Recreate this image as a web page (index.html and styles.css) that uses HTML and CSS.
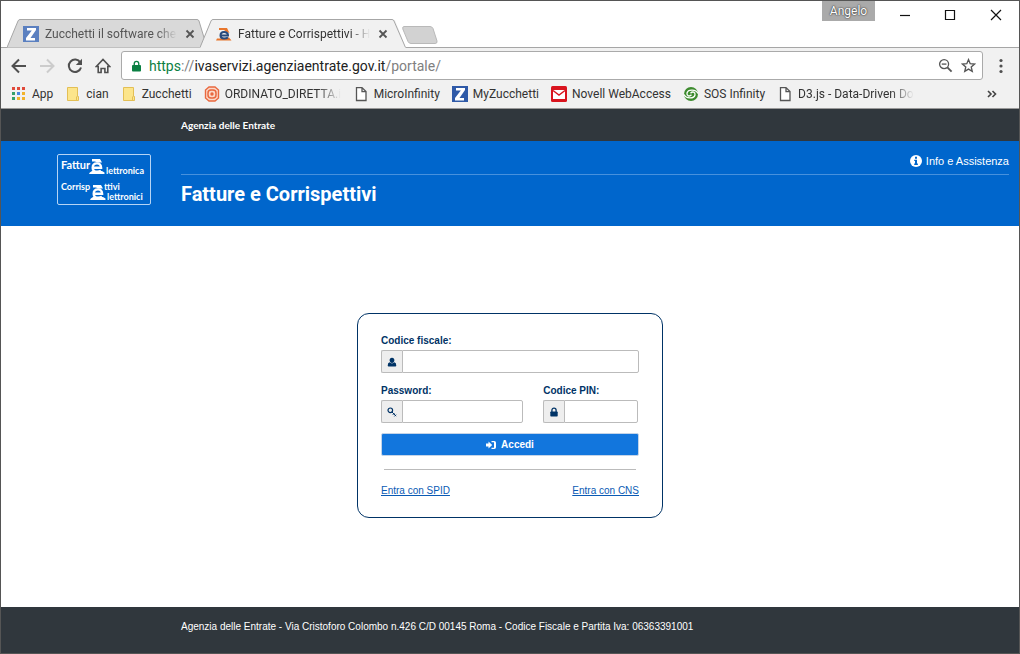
FILE: index.html
```html
<!DOCTYPE html>
<html lang="it">
<head>
<meta charset="utf-8">
<title>Fatture e Corrispettivi</title>
<link rel="stylesheet" href="styles.css">
</head>
<body>
<svg class="defs" width="0" height="0" aria-hidden="true">
  <symbol id="z-logo" viewBox="0 0 16 16"><path fill="currentColor" d="M0 0h16v16H0z"/><path fill="#fff" d="M4 2h9v2L7.500 12H12v2.500H3V12L8.800 4.500H4z"/></symbol>
  <symbol id="folder" viewBox="0 0 16 16"><path fill="#fce58b" stroke="#e3bf55" d="M2.500 1.500h10v9h1v4h-11z"/><path fill="none" stroke="#e3bf55" d="M11.500 10.500v4"/></symbol>
  <symbol id="page" viewBox="0 0 16 16"><path fill="#fff" stroke="#555" stroke-width="1.300" d="M3.500 1.600H9l4 4v8.900H3.500zM9 1.600v4h4"/></symbol>
  <symbol id="close" viewBox="0 0 10 10"><path fill="none" stroke="currentColor" stroke-width="1.800" d="M1.500 1.500l7 7M8.500 1.500l-7 7"/></symbol>
  <symbol id="e-mark" viewBox="0 0 16 17"><path fill="currentColor" d="M3 1h8l2 3.500H8L6 3.500H3zM.8 14.500 3 13h10l2.500 1.500V16H0z"/><path fill="none" stroke="currentColor" stroke-width="2.400" d="M3.500 9.800h8.600C12 6.800 10.500 5.400 8 5.400S3.700 7 3.700 9.700s1.800 4.100 4.500 4.100c1.500 0 2.800-.3 3.800-1"/></symbol>
</svg>
<div class="window">
  <header class="titlebar">
    <div class="tabs">
      <div class="tab tab-back">
        <svg class="tab-shape" viewBox="0 0 200 29" preserveAspectRatio="none"><path fill="#d9d9d9" stroke="#a6a6a6" d="M0 28.500 11 2q.6-1.500 2-1.500h177q1.500 0 2 1.500l8 26.500"/></svg>
        <svg class="icon z-soft"><use href="#z-logo"/></svg>
        <span class="tab-title">Zucchetti il software che</span>
        <button class="plain tab-close" aria-label="Chiudi scheda"><svg><use href="#close"/></svg></button>
      </div>
      <div class="tab tab-front">
        <svg class="tab-shape" viewBox="0 0 206 29" preserveAspectRatio="none"><path fill="#f1f1f1" d="M0 29 11 1h184l11 28z"/><path fill="none" stroke="#a6a6a6" d="M0 28.500 11 2q.6-1.500 2-1.500h179q1.500 0 2 1.500l11.500 26.500"/></svg>
        <svg class="icon" viewBox="0 0 16 16"><path fill="#e8762c" d="M3 2h8l2.500 5-3-1L8 4H3zM1 12.500h3l9-1 2.500 3H0z"/><path fill="none" stroke="#274a7c" stroke-width="2" d="M4.500 9.500H12C12 7.300 10.500 6 8 6S4.500 7.300 4.500 9.500 6 12.500 8 12.500s3-.3 4-1"/></svg>
        <span class="tab-title">Fatture e Corrispettivi - H</span>
        <button class="plain tab-close" aria-label="Chiudi scheda"><svg><use href="#close"/></svg></button>
      </div>
      <button class="plain new-tab" aria-label="Nuova scheda"><svg viewBox="0 0 36 18"><path fill="#d2d2d2" stroke="#b9b9b9" d="M2 .5h26q2 0 3 2l4 12.500q.5 2.500-2 2.500H9q-2 0-3-2L.8 3Q.2.5 2 .5z"/></svg></button>
    </div>
    <div class="controls">
      <button class="plain profile">Angelo</button>
      <button class="plain control" aria-label="Riduci"><svg viewBox="0 0 12 12"><path d="M1 6.500h10"/></svg></button>
      <button class="plain control" aria-label="Ingrandisci"><svg viewBox="0 0 12 12"><path d="M1.500 1.500h9v9h-9z"/></svg></button>
      <button class="plain control" aria-label="Chiudi"><svg viewBox="0 0 12 12"><path d="M1 1l10 10M11 1 1 11"/></svg></button>
    </div>
  </header>

  <div class="toolbar">
    <button class="plain tool" aria-label="Indietro"><svg viewBox="0 0 16 16"><path d="M15 8H2M8 1.500 1.500 8 8 14.500"/></svg></button>
    <button class="plain tool tool-off" aria-label="Avanti"><svg viewBox="0 0 16 16"><path d="M1 8h13M8 1.500 14.500 8 8 14.500"/></svg></button>
    <button class="plain tool" aria-label="Ricarica"><svg viewBox="0 0 16 16"><path d="M13.300 4.500A6.200 6.200 0 1 0 14 9.500"/><path class="solid" d="M15 .8V7H8.800z"/></svg></button>
    <button class="plain tool" aria-label="Pagina iniziale"><svg viewBox="0 0 16 16"><path stroke-width="1.600" d="M3.200 8.500H1.300L8 1.500l6.700 7h-1.900v6H9.900v-4H6.100v4H3.200z"/></svg></button>
    <div class="address">
      <svg class="padlock" viewBox="0 0 10 12"><path fill="#0b8043" d="M1 5h8q1 0 1 1v5q0 1-1 1H1q-1 0-1-1V6q0-1 1-1z"/><path fill="none" stroke="#0b8043" stroke-width="1.500" d="M2.500 5.500V3.300a2.500 2.500 0 0 1 5 0v2.200"/></svg>
      <div class="url"><span class="secure">https</span><span class="dim">://</span>ivaservizi.agenziaentrate.gov.it<span class="dim">/portale/</span></div>
      <button class="plain" aria-label="Zoom"><svg class="field-icon" viewBox="0 0 16 16"><circle cx="6.500" cy="6.500" r="4.800"/><path d="M4 6.500h5"/><path stroke-width="2" d="M10 10l4.500 4.500"/></svg></button>
      <button class="plain" aria-label="Preferiti"><svg class="field-icon" viewBox="0 0 16 16"><path d="M8 1.700l1.800 4.400 4.700.4-3.600 3.100 1.100 4.600L8 11.800l-4 2.400 1.100-4.600-3.600-3.100 4.700-.4z"/></svg></button>
    </div>
    <button class="plain menu" aria-label="Menu"><svg viewBox="0 0 4 16"><circle cx="2" cy="2.500" r="1.600"/><circle cx="2" cy="8" r="1.600"/><circle cx="2" cy="13.500" r="1.600"/></svg></button>
  </div>

  <nav class="bookmarks">
    <a href="#"><svg class="icon" viewBox="0 0 16 16"><path fill="#e04a3a" d="M1 1h3v3H1zM6 1h3v3H6zM11 1h3v3h-3z"/><path fill="#35a06a" d="M1 6h3v3H1zM1 11h3v3H1z"/><path fill="#4a86e0" d="M6 6h3v3H6z"/><path fill="#f2b32b" d="M11 6h3v3h-3zM6 11h3v3H6zM11 11h3v3h-3z"/></svg><span>App</span></a>
    <a href="#"><svg class="icon"><use href="#folder"/></svg><span>cian</span></a>
    <a href="#"><svg class="icon"><use href="#folder"/></svg><span>Zucchetti</span></a>
    <a href="#"><svg class="icon" viewBox="0 0 16 16"><g fill="none" stroke="#e9683f"><path fill="#fbd9c9" stroke-width="1.400" d="M5 1h6l3.500 3v8L11 15H5l-3.500-3V4z"/><rect x="4" y="4" width="8" height="8" rx="3" stroke-width="1.500"/></g><circle cx="8" cy="8" r="1.700" fill="#e9683f"/></svg><span class="clipped">ORDINATO_DIRETTA.i</span></a>
    <a href="#"><svg class="icon"><use href="#page"/></svg><span>MicroInfinity</span></a>
    <a href="#"><svg class="icon z-full"><use href="#z-logo"/></svg><span>MyZucchetti</span></a>
    <a href="#"><svg class="icon" viewBox="0 0 16 16"><rect width="16" height="16" rx="1.500" fill="#d9141e"/><path fill="#fff" d="M2 4h12v9H2z"/><path fill="none" stroke="#d9141e" stroke-width="1.400" d="M2 4.500l6 4.500 6-4.500"/></svg><span>Novell WebAccess</span></a>
    <a href="#"><svg class="icon" viewBox="0 0 16 16"><circle cx="8" cy="8" r="7" fill="#3d8b2e"/><path fill="none" stroke="#fff" stroke-width="1.300" d="M1 8.500c2 4.500 10 4.500 11 .5C12.500 6 9.500 5 7.500 7.200M15 7.500C13 3 5 3 4 7c-.5 3 2.500 4 4.500 1.800"/></svg><span>SOS Infinity</span></a>
    <a href="#"><svg class="icon"><use href="#page"/></svg><span class="clipped">D3.js - Data-Driven Do</span></a>
    <button class="plain more" aria-label="Altri preferiti"><svg viewBox="0 0 10 8"><path d="M1 1l3 3-3 3M5.500 1l3 3-3 3"/></svg></button>
  </nav>

  <div class="agency">Agenzia delle Entrate</div>
  <div class="banner">
    <svg class="logo" viewBox="0 0 94 51" role="img" aria-label="Fattura Elettronica, Corrispettivi Elettronici">
      <rect x=".5" y=".5" width="93" height="50" rx="1.500"/>
      <text class="large" x="4" y="15">Fattur</text><text x="49" y="20">lettronica</text>
      <text x="4" y="36">Corrisp</text><text x="47" y="36">ttivi</text><text x="50" y="46">lettronici</text>
      <use href="#e-mark" x="32" y="4" width="16" height="17"/><use href="#e-mark" x="33" y="30" width="16" height="17"/>
    </svg>
    <div class="banner-text">
      <a class="info" href="#"><svg viewBox="0 0 12 12"><circle cx="6" cy="6" r="6" fill="#fff"/><path fill="#06c" d="M5 1.800h2v1.900H5zM4.200 4.800H7v3.800h.9V10H4.200V8.600H5V6.100h-.8z"/></svg>Info e Assistenza</a>
      <h1>Fatture e Corrispettivi</h1>
    </div>
  </div>

  <main>
    <form class="login">
      <div class="field">
        <label for="cf">Codice fiscale:</label>
        <div class="group"><span class="addon"><svg viewBox="0 0 10 10"><path d="M5 .8c1.600 0 2.400 1.200 2.400 2.500S6.400 6 5 6 2.600 4.600 2.600 3.300 3.400.8 5 .8zM2.600 5.300Q5 7.500 7.400 5.300 9.300 5.800 9.300 8.500q0 1-1 1H1.700q-1 0-1-1 0-2.700 1.900-3.200z"/></svg></span><input id="cf" type="text"></div>
      </div>
      <div class="pair">
        <div class="field">
          <label for="pw">Password:</label>
          <div class="group"><span class="addon"><svg viewBox="0 0 10 10"><g fill="none" stroke="#003366"><circle cx="3.300" cy="3.300" r="2.300" stroke-width="1.200"/><path d="M4.900 4.900l4.300 4.300M5.800 7.800l1.600-1.600M7.400 9.400l1.700-1.700"/></g></svg></span><input id="pw" type="password"></div>
        </div>
        <div class="field">
          <label for="pin">Codice PIN:</label>
          <div class="group"><span class="addon"><svg viewBox="0 0 10 10"><path d="M2 4.500h6q.7 0 .7.700v3.600q0 .7-.7.700H2q-.7 0-.7-.7V5.200q0-.7.700-.7z"/><path fill="none" stroke="#003366" stroke-width="1.300" d="M2.900 5V3.200a2.100 2.100 0 0 1 4.200 0V5"/></svg></span><input id="pin" type="password"></div>
        </div>
      </div>
      <button class="submit" type="button"><svg viewBox="0 0 10 10"><path d="M0 3.500h2.500v-2l3.700 3.500-3.700 3.500v-2H0z"/><path d="M5.500 1h2.700Q10 1 10 2.700v4.600Q10 9 8.200 9H5.500V7.800H8V2.200H5.500z"/></svg>Accedi</button>
      <hr>
      <div class="links"><a href="#">Entra con SPID</a><a href="#">Entra con CNS</a></div>
    </form>
  </main>
  <footer>Agenzia delle Entrate - Via Cristoforo Colombo n.426 C/D 00145 Roma - Codice Fiscale e Partita Iva: 06363391001</footer>
</div>
</body>
</html>
```
FILE: styles.css
```css
* { box-sizing: border-box; }
body { margin: 0; font-family: "Liberation Sans", Arial, sans-serif; }
svg { display: block; flex: none; }
.defs { position: absolute; }
.plain { display: flex; align-items: center; justify-content: center; padding: 0; border: 0; background: none; color: inherit; font: inherit; }
.icon { width: 16px; height: 16px; }

.window { display: flex; flex-direction: column; min-height: 100vh; border: 1px solid #555; background: #fff; }

/* Title bar and tabs */
.titlebar, .toolbar, .bookmarks { font-family: Roboto, "Open Sans", sans-serif; font-size: 12px; color: #333; }
.titlebar { display: flex; justify-content: space-between; height: 47px; border-bottom: 1px solid #a6a6a6; }
.tabs { display: flex; align-items: flex-end; padding-left: 6px; margin-bottom: -1px; }
.tab { position: relative; display: flex; align-items: center; width: 200px; height: 29px; padding: 0 12px 0 16px; gap: 6px; }
.tab-front { width: 206px; margin-left: -7px; padding-right: 19px; }
.tab-shape { position: absolute; inset: 0; width: 100%; height: 100%; }
.tab > .icon, .tab-title, .tab-close { position: relative; }
.tab-title { flex: 1; white-space: nowrap; mask-image: linear-gradient(to right, #000 85%, transparent); }
.tab-close { color: #555; width: 10px; margin-left: 2px; }
.tab-close svg { width: 10px; height: 10px; }
.tab-back { color: #555; }
.z-soft { color: #5b80c0; }
.z-full { color: #2f5aa8; }
.new-tab { margin-left: -4px; }
.new-tab svg { width: 36px; height: 18px; margin-bottom: 4px; }
.controls { display: flex; align-items: flex-start; }
.profile { width: 53px; height: 20px; margin-right: 7px; background: #aaa; color: #fff; font-size: 12px; text-shadow: 0 0 2px #333, 0 0 1px #333; }
.control { width: 45px; height: 28px; }
.control:last-child { width: 47px; }
.control svg { width: 12px; height: 12px; fill: none; stroke: #111; stroke-width: 1.2; }

/* Navigation */
.toolbar { display: flex; align-items: center; gap: 12px; height: 34px; padding: 3px 16px 2px 10px; background: #f1f1f1; }
.tool svg { width: 16px; height: 16px; fill: none; stroke: #505050; stroke-width: 2; }
.tool .solid { fill: #505050; stroke: none; }
.tool-off svg { stroke: #ccc; }
.address { display: flex; flex: 1; align-items: center; gap: 8px; height: 29px; margin-left: -2px; padding: 0 6px 0 10px; border: 1px solid #aaa; border-radius: 3px; background: #fff; }
.padlock { width: 9px; height: 12px; }
.url { flex: 1; font-size: 14px; color: #222; white-space: nowrap; }
.secure { color: #0b8043; }
.dim { color: #808080; }
.field-icon { width: 15px; height: 15px; fill: none; stroke: #555; stroke-width: 1.4; }
.menu { margin-left: 4px; }
.menu svg { width: 4px; height: 16px; fill: #505050; }
.bookmarks { display: flex; align-items: center; gap: 12px; height: 27px; padding: 0 22px 2px 10px; border-bottom: 1px solid #999; background: #f1f1f1; }
.bookmarks a { display: flex; align-items: center; gap: 5px; color: #333; text-decoration: none; white-space: nowrap; }
.clipped { width: 116px; mask-image: linear-gradient(to right, #000 80%, transparent); }
.more { margin-left: auto; }
.more svg { width: 10px; height: 8px; fill: none; stroke: #444; stroke-width: 1.6; }

/* Site header */
.agency { padding: 8px 0 8px 180px; background: #30373d; color: #fff; font: bold 10px/16px Lato, sans-serif; }
.banner { display: flex; gap: 30px; padding: 13px 10px 15px 56px; background: #06c; color: #fff; }
.logo { width: 94px; height: 51px; align-self: flex-start; color: #fff; fill: #fff; font: bold 9px Lato, sans-serif; }
.logo .large { font-size: 11px; }
.logo rect { fill: none; stroke: #b5d4f5; }
.banner-text { flex: 1; }
.info { display: flex; align-items: center; justify-content: flex-end; gap: 4px; height: 21px; padding-bottom: 6px; border-bottom: 1px solid #4791dd; color: #fff; font-size: 11px; text-decoration: none; }
.info svg { width: 12px; height: 12px; }
h1 { margin: 3px 0 0; font: bold 20px/32px Roboto, sans-serif; padding-bottom: 1px; }

/* Login */
main { display: flex; flex: 1; align-items: center; justify-content: center; padding-bottom: 2px; }
.login { display: flex; flex-direction: column; width: 306px; padding: 20px 23px 19px; border: 1px solid #036; border-radius: 12px; color: #036; font-size: 10px; }
.field label { display: block; font-weight: bold; line-height: 14px; padding-bottom: 2px; }
.group { display: flex; height: 23px; }
.addon { display: flex; align-items: center; justify-content: center; width: 21px; border: 1px solid #bbb; border-right: 0; border-radius: 2px 0 0 2px; background: #eee; }
.addon svg { width: 10px; height: 10px; fill: #036; }
.group input { flex: 1; min-width: 0; padding: 0 6px; border: 1px solid #bbb; border-radius: 0 2px 2px 0; font: inherit; }
.pair { display: grid; grid-template-columns: minmax(0, 3fr) minmax(0, 2fr); gap: 20px; padding: 11px 1px 10px 0; }
.submit { display: flex; align-items: center; justify-content: center; gap: 5px; height: 23px; padding: 0; border: 1px solid #c4d4e8; border-radius: 2px; background: #1276dd; color: #fff; font: bold 10px "Liberation Sans", sans-serif; }
.submit svg { width: 10px; height: 10px; fill: #fff; }
hr { width: 252px; margin: 13px auto 14px; border: 0; border-top: 1px solid #bbb; }
.links { display: flex; justify-content: space-between; line-height: 14px; }
.links a { color: #0a5ab4; }

footer { height: 46px; padding: 12px 20px 0 180px; background: #30373d; color: #fff; font-size: 10px; line-height: 16px; }
```
